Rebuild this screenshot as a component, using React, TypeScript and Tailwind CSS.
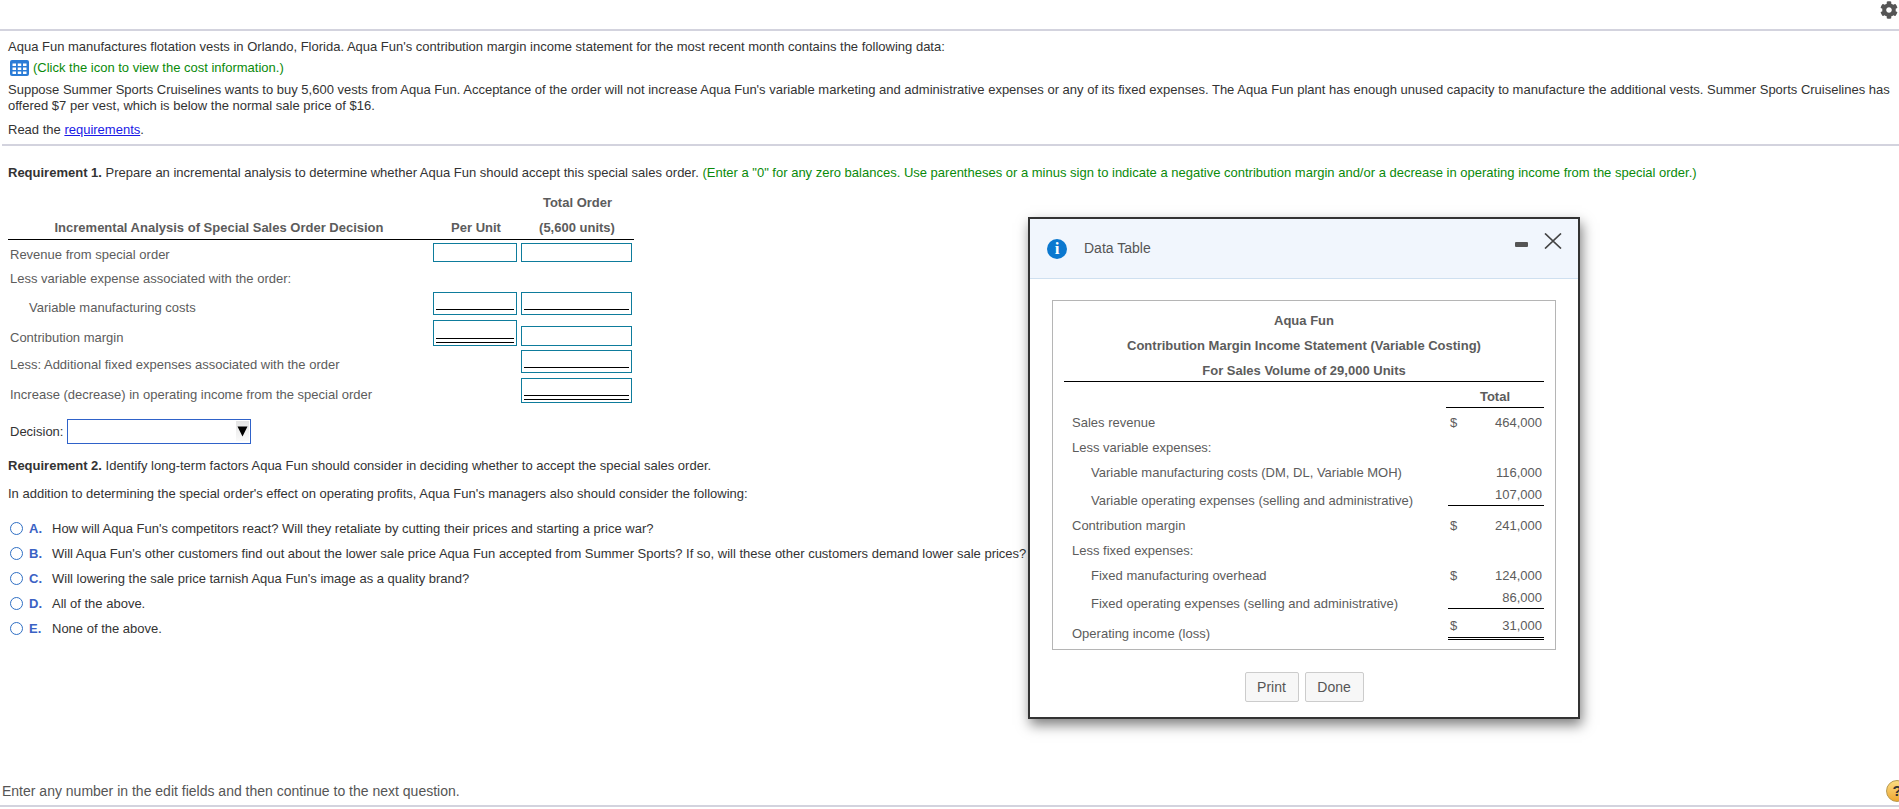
import { FaCog } from "react-icons/fa";

function Cell({ className = "", lines = 0 }: { className?: string; lines?: number }) {
  return (
    <div className={`flex flex-col justify-end border border-[#0e7c9c] px-[2px] pb-[2px] ${className}`}>
      {lines === 1 && <div className="mb-[2px] h-px bg-black" />}
      {lines === 2 && <div className="h-[5px] border-y border-black" />}
    </div>
  );
}

function AnalysisRow({
  label,
  labelClass,
  indent = false,
  children,
  className,
}: {
  label: string;
  labelClass: string;
  indent?: boolean;
  children?: React.ReactNode;
  className: string;
}) {
  return (
    <div className={`flex w-[626px] ${className}`}>
      <div className={`w-[424px] shrink-0 leading-4 text-[#5c5c5c] ${indent ? "pl-[21px]" : "pl-[2px]"} ${labelClass}`}>
        {label}
      </div>
      {children}
    </div>
  );
}

const CHOICES = [
  ["A.", "How will Aqua Fun's competitors react? Will they retaliate by cutting their prices and starting a price war?"],
  ["B.", "Will Aqua Fun's other customers find out about the lower sale price Aqua Fun accepted from Summer Sports? If so, will these other customers demand lower sale prices?"],
  ["C.", "Will lowering the sale price tarnish Aqua Fun's image as a quality brand?"],
  ["D.", "All of the above."],
  ["E.", "None of the above."],
];

function StatementRow({
  label,
  indent = false,
  className,
  labelClass = "pt-[5px]",
  amountClass = "pt-[5px]",
  sign,
  amount,
}: {
  label: string;
  indent?: boolean;
  className: string;
  labelClass?: string;
  amountClass?: string;
  sign?: string;
  amount?: string;
}) {
  return (
    <div className={`flex ${className}`}>
      <div className={`flex-1 leading-4 ${indent ? "pl-[27px]" : "pl-2"} ${labelClass}`}>{label}</div>
      <div className="w-[98px] shrink-0">
        <div className={`flex justify-between pl-1 pr-[2px] leading-4 ${amountClass}`}>
          <span>{sign}</span>
          <span>{amount}</span>
        </div>
      </div>
    </div>
  );
}

export default function App() {
  return (
    <div className="relative flex h-[809px] w-[1899px] flex-col overflow-hidden bg-white font-['Liberation_Sans',Arial,sans-serif] text-[13px] text-[#333]">
      <div className="flex h-[31px] shrink-0 justify-end border-b-2 border-[#d3d3de] pr-[1px]">
        <FaCog className="mt-px h-[18px] w-[18px] text-[#555]" />
      </div>

      <div className="flex-1 pl-2">
        <p className="mt-2 leading-4">
          Aqua Fun manufactures flotation vests in Orlando, Florida. Aqua Fun's contribution margin income statement for the most recent month contains the following data:
        </p>
        <p className="mt-[5px] flex items-center gap-[4px] pl-[2px] leading-4 text-[#0a8a0a]">
          <svg width="19" height="16" viewBox="0 0 19 16" className="shrink-0">
            <rect width="19" height="16" rx="2" fill="#2a7bd6" />
            <path d="M2.500 3.500h3.500v2.500H2.500zM7.750 3.500h3.500v2.500h-3.500zM13 3.500h3.500v2.500H13zM2.500 7.500h3.500v2.500H2.500zM7.750 7.500h3.500v2.500h-3.500zM13 7.500h3.500v2.500H13zM2.500 11.500h3.500v2.500H2.500zM7.750 11.500h3.500v2.500h-3.500zM13 11.500h3.500v2.500H13z" fill="#fff" />
          </svg>
          (Click the icon to view the cost information.)
        </p>
        <p className="mt-[6px] w-[1891px] leading-4">
          Suppose Summer Sports Cruiselines wants to buy 5,600 vests from Aqua Fun. Acceptance of the order will not increase Aqua Fun's variable marketing and administrative expenses or any of its fixed expenses. The Aqua Fun plant has enough unused capacity to manufacture the additional vests. Summer Sports Cruiselines has offered $7 per vest, which is below the normal sale price of $16.
        </p>
        <p className="mt-2 leading-4">
          Read the <span className="text-[#1a1ae6] underline">requirements</span>.
        </p>
        <div className="-ml-[6px] mt-[6px] h-[2px] bg-[#d3d3de]" />

        <p className="mt-[19px] whitespace-nowrap leading-4">
          <b>Requirement 1.</b> Prepare an incremental analysis to determine whether Aqua Fun should accept this special sales order.{" "}
          <span className="text-[#0a8a0a]">
            (Enter a "0" for any zero balances. Use parentheses or a minus sign to indicate a negative contribution margin and/or a decrease in operating income from the special order.)
          </span>
        </p>

        <div className="mt-[14px] flex w-[626px] justify-end font-bold leading-4 text-[#5c5c5c]">
          <div className="w-[113px] text-center">Total Order</div>
        </div>
        <div className="mt-[9px] flex w-[626px] border-b border-black pb-[3px] font-bold leading-4 text-[#5c5c5c]">
          <div className="w-[424px] pr-[2px] text-center">Incremental Analysis of Special Sales Order Decision</div>
          <div className="w-[88px] text-center">Per Unit</div>
          <div className="w-[114px] text-center">(5,600 units)</div>
        </div>

        <AnalysisRow label="Revenue from special order" labelClass="pt-[7px]" className="h-[27px]">
          <Cell className="ml-[1px] mt-[3px] h-[19px] w-[84px]" />
          <Cell className="ml-[4px] mt-[3px] h-[19px] w-[111px]" />
        </AnalysisRow>
        <AnalysisRow label="Less variable expense associated with the order:" labelClass="pt-1" className="h-[24px]" />
        <AnalysisRow label="Variable manufacturing costs" indent labelClass="pt-[9px]" className="h-[27px]">
          <Cell lines={1} className="ml-[1px] mt-[1px] h-[23px] w-[84px]" />
          <Cell lines={1} className="ml-[4px] mt-[1px] h-[23px] w-[111px]" />
        </AnalysisRow>
        <AnalysisRow label="Contribution margin" labelClass="pt-3" className="h-[30px]">
          <Cell lines={2} className="ml-[1px] mt-[2px] h-[26px] w-[84px]" />
          <Cell className="ml-[4px] mt-2 h-[20px] w-[111px]" />
        </AnalysisRow>
        <AnalysisRow label="Less: Additional fixed expenses associated with the order" labelClass="pt-[9px]" className="h-[27px]">
          <Cell lines={1} className="ml-[89px] mt-[2px] h-[23px] w-[111px]" />
        </AnalysisRow>
        <AnalysisRow label="Increase (decrease) in operating income from the special order" labelClass="pt-3" className="h-[30px]">
          <Cell lines={2} className="ml-[89px] mt-[3px] h-[25px] w-[111px]" />
        </AnalysisRow>

        <div className="mt-[14px] flex h-[25px] items-center pl-[2px]">
          <span className="w-[57px] text-[#333]">Decision:</span>
          <div className="flex h-full w-[184px] justify-end border border-[#2f62c9] p-px">
            <div className="flex h-[20px] w-[13px] items-center justify-center bg-linear-to-b from-[#e4e4e4] to-[#fafafa]">
              <svg width="11" height="11" viewBox="0 0 11 11">
                <path d="M0.500 0.500h10L5.500 10.500z" fill="#000" />
              </svg>
            </div>
          </div>
        </div>

        <p className="mt-[14px] leading-4">
          <b>Requirement 2.</b> Identify long-term factors Aqua Fun should consider in deciding whether to accept the special sales order.
        </p>
        <p className="mt-3 leading-4">
          In addition to determining the special order's effect on operating profits, Aqua Fun's managers also should consider the following:
        </p>
        <ul className="mt-[14px]">
          {CHOICES.map(([letter, text]) => (
            <li key={letter} className="flex h-[25px] items-center whitespace-nowrap">
              <span className="ml-[2px] h-[13px] w-[13px] shrink-0 rounded-full border border-[#2f6fc4]" />
              <span className="ml-[6px] w-[23px] shrink-0 font-bold text-[#3b62c4]">{letter}</span>
              <span>{text}</span>
            </li>
          ))}
        </ul>
      </div>

      <div className="mb-[2px] flex h-[27px] shrink-0 items-start justify-between border-b-2 border-[#d3d3de] pl-[2px]">
        <span className="pt-[3px] text-[14px] leading-4 text-[#555]">Enter any number in the edit fields and then continue to the next question.</span>
        <span className="-mr-[9px] flex h-[22px] w-[22px] items-center justify-center rounded-full border border-[#b89a50] bg-linear-to-b from-[#fbdc80] to-[#eea82c] text-[15px] font-bold text-[#333]">?</span>
      </div>

      <div className="absolute left-[1028px] top-[217px] flex h-[502px] w-[552px] flex-col border-2 border-[#333] bg-white shadow-[2px_6px_12px_rgba(0,0,0,0.5)]">
        <div className="relative flex h-[60px] shrink-0 items-center border-b border-[#cfe0f0] bg-[#f1f6fd] pl-[17px]">
          <span className="flex h-5 w-5 items-center justify-center rounded-full bg-[#0b78cf] font-['Liberation_Serif',serif] text-[17px] font-bold leading-none text-white">i</span>
          <span className="ml-[17px] text-[14px] text-[#555]">Data Table</span>
          <span className="absolute left-[485px] top-[23px] h-[5px] w-[13px] rounded-[1px] bg-[#555]" />
          <svg width="18" height="16" viewBox="0 0 18 16" className="absolute left-[514px] top-[14px]">
            <path d="M1 0.500 17 15.500M17 0.500 1 15.500" stroke="#444" strokeWidth="1.700" fill="none" />
          </svg>
        </div>

        <div className="ml-[22px] mt-[21px] h-[350px] w-[504px] border border-[#b5b5b5] text-[#5c5c5c]">
          <div className="mx-[11px] mt-3 w-[480px]">
            <div className="text-center font-bold leading-4">Aqua Fun</div>
            <div className="mt-[9px] text-center font-bold leading-4">Contribution Margin Income Statement (Variable Costing)</div>
            <div className="mt-[9px] border-b border-black pb-[2px] text-center font-bold leading-4">For Sales Volume of 29,000 Units</div>
            <div className="ml-auto mt-[7px] w-[98px] border-b border-black pb-[2px] text-center font-bold leading-4">Total</div>
            <StatementRow label="Sales revenue" className="h-[27px]" labelClass="pt-[7px]" amountClass="pt-[7px]" sign="$" amount="464,000" />
            <StatementRow label="Less variable expenses:" className="h-[25px]" />
            <StatementRow label="Variable manufacturing costs (DM, DL, Variable MOH)" indent className="h-[25px]" amount="116,000" />
            <div className="flex h-[28px]">
              <div className="flex-1 pl-[27px] pt-2 leading-4">Variable operating expenses (selling and administrative)</div>
              <div className="ml-[2px] h-[21px] w-[96px] border-b border-black pr-[2px] pt-[2px] text-right leading-4">107,000</div>
            </div>
            <StatementRow label="Contribution margin" className="h-[25px]" sign="$" amount="241,000" />
            <StatementRow label="Less fixed expenses:" className="h-[25px]" />
            <StatementRow label="Fixed manufacturing overhead" indent className="h-[25px]" sign="$" amount="124,000" />
            <div className="flex h-[28px]">
              <div className="flex-1 pl-[27px] pt-2 leading-4">Fixed operating expenses (selling and administrative)</div>
              <div className="ml-[2px] h-[21px] w-[96px] border-b border-black pr-[2px] pt-[2px] text-right leading-4">86,000</div>
            </div>
            <div className="flex h-[32px]">
              <div className="flex-1 pl-2 pt-[10px] leading-4">Operating income (loss)</div>
              <div className="ml-[2px] flex h-[24px] w-[96px] justify-between border-b-[3px] border-double border-black pl-[2px] pr-[2px] pt-[2px] leading-4">
                <span>$</span>
                <span>31,000</span>
              </div>
            </div>
          </div>
        </div>

        <div className="mt-[22px] flex justify-center gap-[6px]">
          <button type="button" className="h-[30px] w-[54px] rounded-[2px] border border-[#ccc] bg-[#f7f7f7] text-[14px] text-[#555]">Print</button>
          <button type="button" className="h-[30px] w-[59px] rounded-[2px] border border-[#ccc] bg-[#f7f7f7] text-[14px] text-[#555]">Done</button>
        </div>
      </div>
    </div>
  );
}
